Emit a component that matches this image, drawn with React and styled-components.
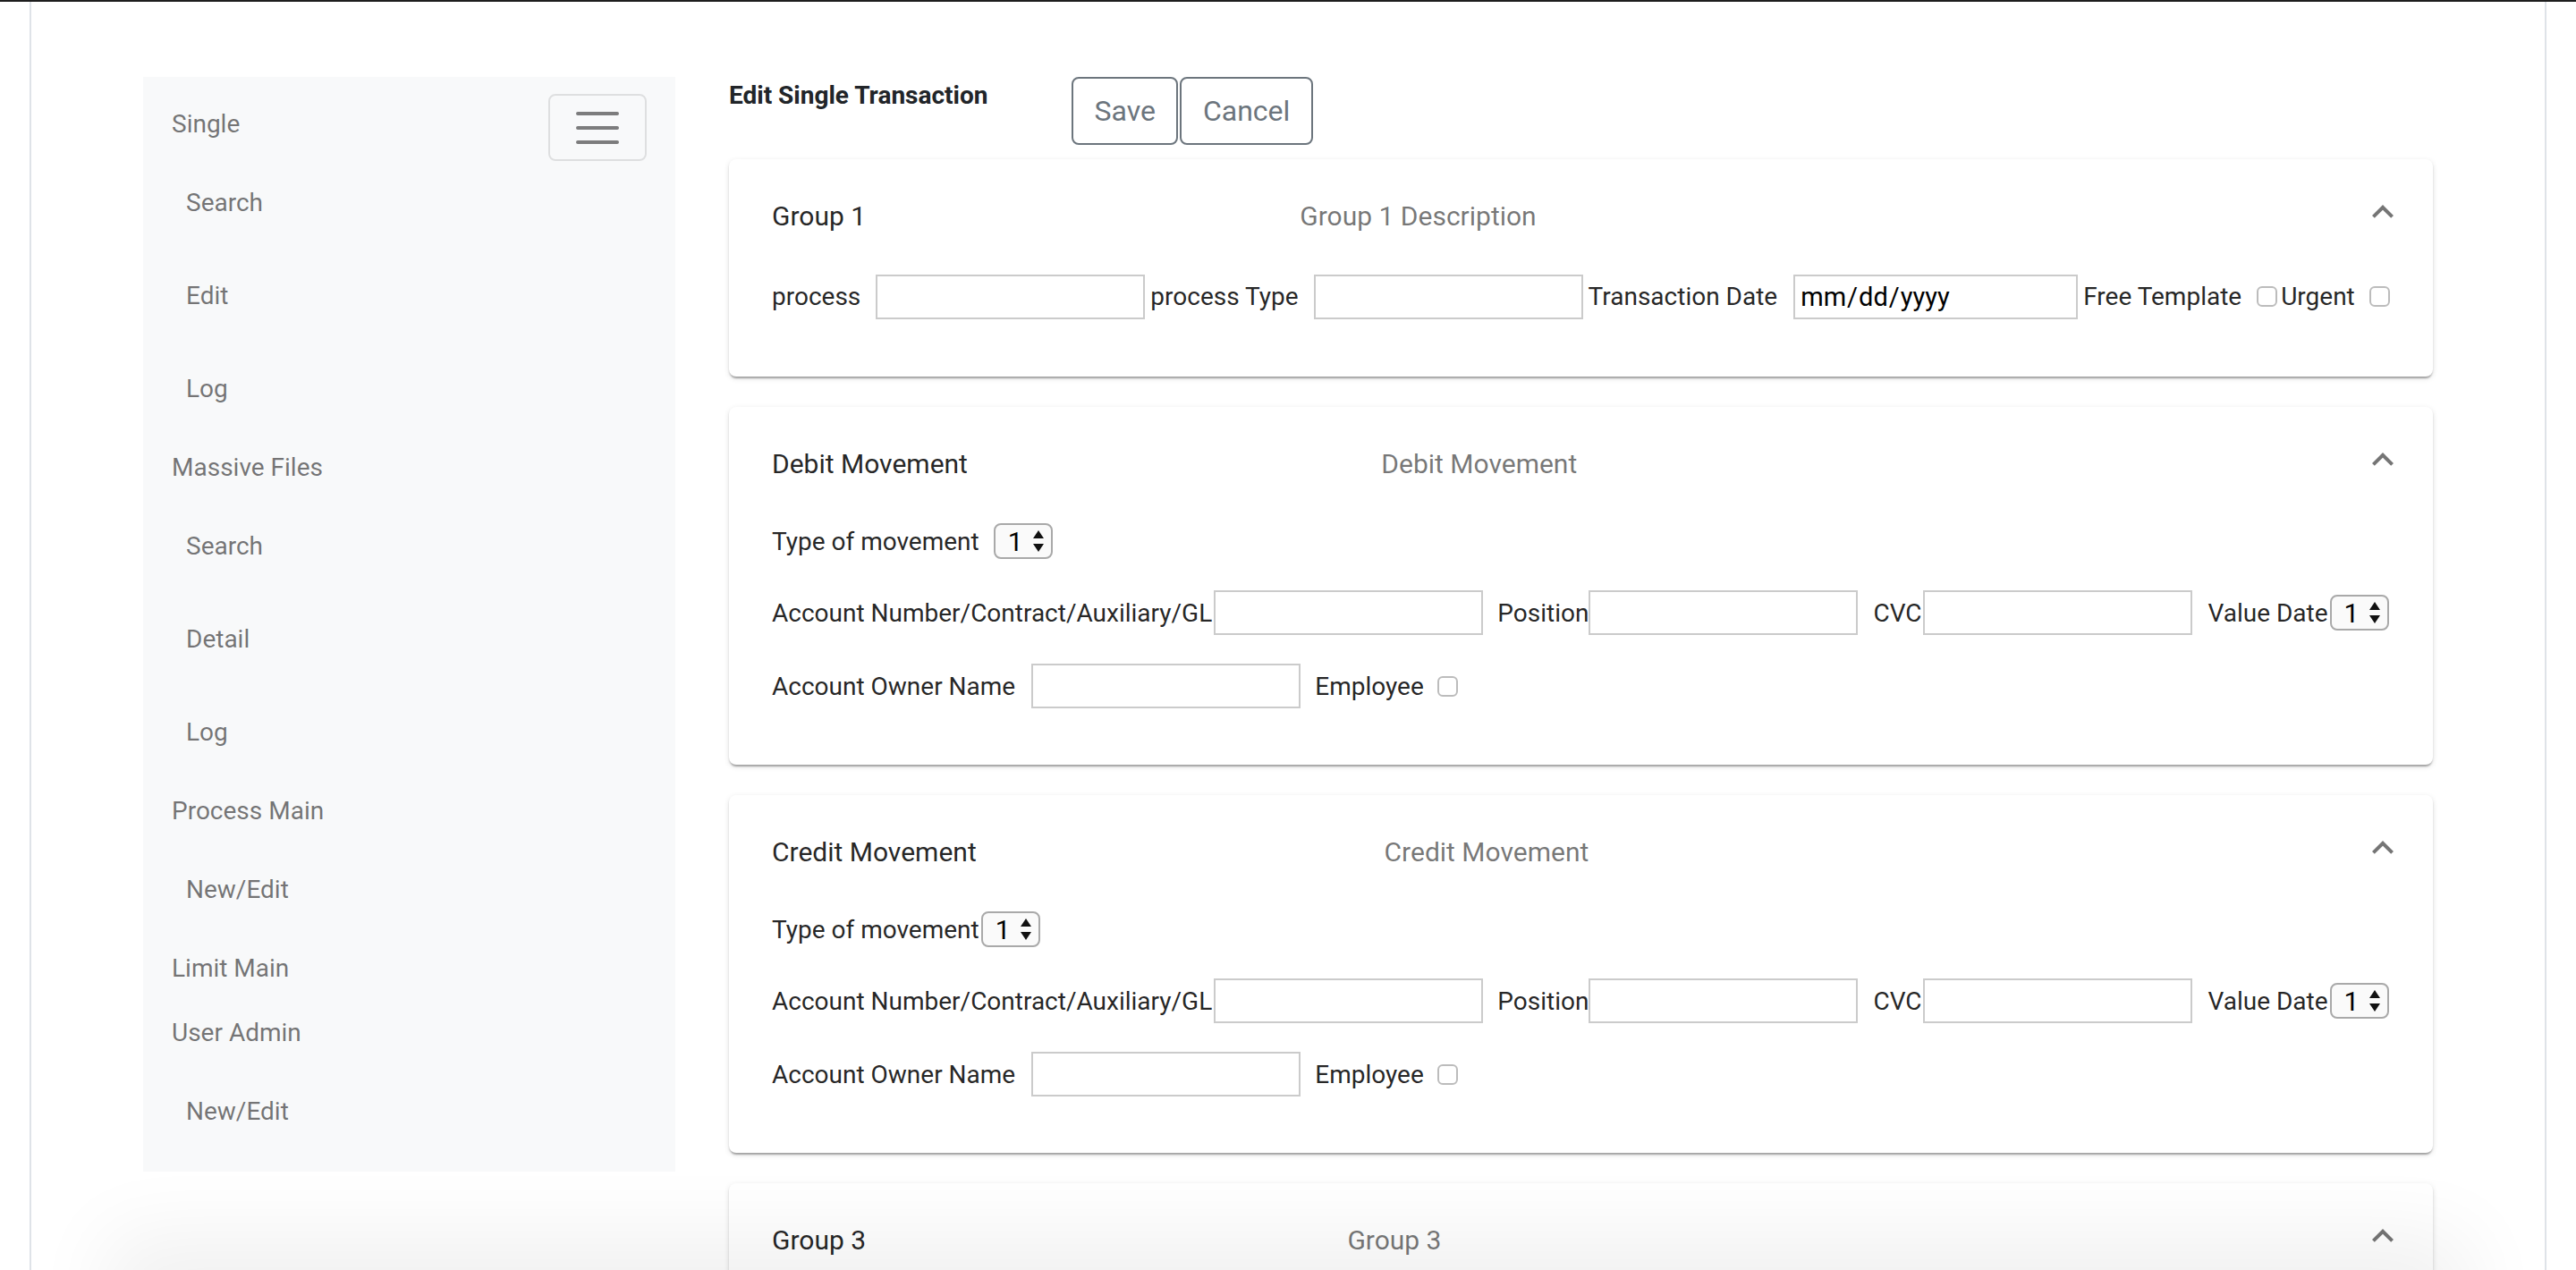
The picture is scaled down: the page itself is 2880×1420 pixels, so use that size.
import React from 'react';
import styled, { createGlobalStyle } from 'styled-components';

const GlobalStyle = createGlobalStyle`
  html, body { margin: 0; padding: 0; background: #fff; }
  body { font-family: Roboto, "Liberation Sans", Arial, sans-serif; }
  *, *::before, *::after { box-sizing: border-box; }
`;

const Page = styled.div`
  border-top: 2px solid #1e1e1e;
  min-height: 1420px;
`;

const Frame = styled.div`
  margin: 0 33px;
  min-height: 1418px;
  border-left: 2px solid #dfe3e8;
  border-right: 2px solid #dfe3e8;
  padding: 84px 125px 0;
`;

const Layout = styled.div`
  display: flex;
  align-items: flex-start;
  gap: 60px;
`;

/* ---------- Sidebar ---------- */
const Sidebar = styled.nav`
  flex: none;
  width: 595px;
  background: #f8f9fa;
  padding: 16px 0;
`;

const SidebarTop = styled.div`
  display: flex;
  justify-content: space-between;
  align-items: flex-start;
  height: 72px;
  padding-right: 32px;
`;

const NavHeading = styled.div`
  padding: 17px 32px 15px;
  font-size: 28px;
  line-height: 40px;
  color: rgba(0, 0, 0, 0.55);
`;

const NavSub = styled.div`
  height: 104px;
  display: flex;
  align-items: center;
  padding-left: 48px;
  font-size: 28px;
  color: rgba(0, 0, 0, 0.55);
`;

const Toggler = styled.button`
  width: 110px;
  height: 75px;
  margin-top: 3px;
  padding: 0;
  border: 2px solid rgba(0, 0, 0, 0.1);
  border-radius: 8px;
  background: transparent;
  display: flex;
  align-items: center;
  justify-content: center;
`;

/* ---------- Main ---------- */
const Main = styled.main`
  flex: 1;
  min-width: 0;
`;

const TitleBar = styled.div`
  display: flex;
  align-items: flex-start;
`;

const PageTitle = styled.h1`
  flex: 0 0 383px;
  margin: 0;
  font-size: 28px;
  line-height: 42px;
  font-weight: 700;
  color: #212529;
`;

const OutlineButton = styled.button`
  height: 76px;
  padding: 0 23.5px;
  border: 2px solid #6c757d;
  border-radius: 8px;
  background: #fff;
  color: #6c757d;
  font-family: Roboto, "Liberation Sans", Arial, sans-serif;
  font-size: 32px;
  & + & { margin-left: 2px; }
`;

const PanelList = styled.div`
  margin-top: 16px;
  display: flex;
  flex-direction: column;
  gap: 34px;
`;

const Panel = styled.section`
  background: #fff;
  border-radius: 8px;
  box-shadow: 0 4px 2px -2px rgba(0, 0, 0, 0.2), 0 2px 2px 0 rgba(0, 0, 0, 0.14),
    0 2px 6px 0 rgba(0, 0, 0, 0.12);
`;

const PanelSummary = styled.div`
  height: 126px;
  display: flex;
  align-items: center;
  padding: 0 32px 0 48px;
`;

const SummaryText = styled.div`
  flex: 1;
  min-width: 0;
  display: flex;
`;

const Heading = styled.span`
  flex: 1 1 auto;
  font-size: 30px;
  line-height: 1.5;
  color: rgba(0, 0, 0, 0.87);
  white-space: nowrap;
`;

const SubHeading = styled(Heading)`
  color: rgba(0, 0, 0, 0.54);
`;

const Spacer = styled.span`
  flex: 1 1 auto;
`;

const ExpandIcon = styled.svg`
  flex: none;
  width: 48px;
  height: 48px;
  margin-left: -48px;
  margin-bottom: 9px;
  fill: rgba(0, 0, 0, 0.54);
`;

const PanelBody = styled.div`
  padding: 0 48px 62px;
  display: flex;
  flex-direction: column;
  gap: 30px;
`;

const FieldRow = styled.div`
  display: flex;
  align-items: center;
  height: ${(p) => p.$h || 52}px;
`;

const FieldLabel = styled.label`
  flex: none;
  margin-left: ${(p) => p.$ml || 0}px;
  font-size: 28px;
  color: rgba(0, 0, 0, 0.87);
  white-space: nowrap;
`;

const TextBox = styled.input`
  flex: none;
  width: ${(p) => p.$w || 301}px;
  height: 50px;
  margin: 0 0 0 ${(p) => p.$ml || 0}px;
  border: 2px solid #cbcbcb;
  border-radius: 0;
  padding: 0 5px;
  background: #fff;
  color: #000;
  font-family: Roboto, "Liberation Sans", Arial, sans-serif;
  font-size: 29px;
  outline: none;
  &::-webkit-calendar-picker-indicator { display: none; }
`;

const CheckBox = styled.input.attrs({ type: 'checkbox' })`
  flex: none;
  appearance: none;
  width: 23px;
  height: 23px;
  margin: 0 0 0 ${(p) => p.$ml || 0}px;
  border: 2px solid #bcbcbc;
  border-radius: 6px;
  background: #fff;
`;

const SelectBox = styled.span`
  flex: none;
  display: inline-flex;
  align-items: center;
  width: 66px;
  height: 40px;
  margin-left: ${(p) => p.$ml || 0}px;
  border: 2px solid #a9a9a9;
  border-radius: 8px;
  background: #fafafa;
  padding-left: 14px;
`;

const NativeSelect = styled.select`
  appearance: none;
  border: 0;
  padding: 0;
  margin: 0;
  width: 28px;
  background: transparent;
  color: #000;
  font-family: Roboto, "Liberation Sans", Arial, sans-serif;
  font-size: 30px;
  outline: none;
`;

const SelectArrows = styled.svg`
  flex: none;
  width: 12px;
  height: 24px;
  fill: #111;
`;

const BottomShade = styled.div`
  position: fixed;
  left: 160px;
  right: 160px;
  bottom: -60px;
  height: 60px;
  box-shadow: 0 0 90px 40px rgba(0, 0, 0, 0.06);
  pointer-events: none;
`;

/* ---------- small pieces ---------- */
const HamburgerIcon = () => (
  <svg width="60" height="60" viewBox="0 0 30 30">
    <path d="M4 7h22M4 15h22M4 23h22" stroke="rgba(0,0,0,0.5)" strokeWidth="2" strokeLinecap="round" />
  </svg>
);

const Select = ({ ml }) => (
  <SelectBox $ml={ml}>
    <NativeSelect defaultValue="1">
      <option value="1">1</option>
      <option value="2">2</option>
    </NativeSelect>
    <SelectArrows viewBox="0 0 12 24">
      <path d="M6 0L12 9H0z" />
      <path d="M0 15h12L6 24z" />
    </SelectArrows>
  </SelectBox>
);

const AccordionPanel = ({ title, subtitle, children }) => (
  <Panel>
    <PanelSummary>
      <SummaryText>
        <Heading>{title}</Heading>
        <SubHeading>{subtitle}</SubHeading>
        <Spacer />
      </SummaryText>
      <ExpandIcon viewBox="0 0 24 24">
        <path d="M12 8l-6 6 1.41 1.41L12 10.83l4.59 4.58L18 14z" />
      </ExpandIcon>
    </PanelSummary>
    <PanelBody>{children}</PanelBody>
  </Panel>
);

const MovementFields = ({ selectGap }) => (
  <>
    <FieldRow $h={48}>
      <FieldLabel>Type of movement</FieldLabel>
      <Select ml={selectGap} />
    </FieldRow>
    <FieldRow>
      <FieldLabel>Account Number/Contract/Auxiliary/GL</FieldLabel>
      <TextBox $ml={2} />
      <FieldLabel $ml={16}>Position</FieldLabel>
      <TextBox $ml={0} />
      <FieldLabel $ml={17}>CVC</FieldLabel>
      <TextBox $ml={1} />
      <FieldLabel $ml={18}>Value Date</FieldLabel>
      <Select ml={2} />
    </FieldRow>
    <FieldRow>
      <FieldLabel>Account Owner Name</FieldLabel>
      <TextBox $ml={18} />
      <FieldLabel $ml={16}>Employee</FieldLabel>
      <CheckBox $ml={15} />
    </FieldRow>
  </>
);

const NAV = [
  { title: 'Single', items: ['Search', 'Edit', 'Log'] },
  { title: 'Massive Files', items: ['Search', 'Detail', 'Log'] },
  { title: 'Process Main', items: ['New/Edit'] },
  { title: 'Limit Main', items: [] },
  { title: 'User Admin', items: ['New/Edit'] },
];

export default function App() {
  return (
    <Page>
      <GlobalStyle />
      <Frame>
        <Layout>
          <Sidebar>
            {NAV.map((group, i) => (
              <React.Fragment key={group.title}>
                {i === 0 ? (
                  <SidebarTop>
                    <NavHeading>{group.title}</NavHeading>
                    <Toggler aria-label="Toggle navigation">
                      <HamburgerIcon />
                    </Toggler>
                  </SidebarTop>
                ) : (
                  <NavHeading>{group.title}</NavHeading>
                )}
                {group.items.map((item, j) => (
                  <NavSub key={j}>{item}</NavSub>
                ))}
              </React.Fragment>
            ))}
          </Sidebar>

          <Main>
            <TitleBar>
              <PageTitle>Edit Single Transaction</PageTitle>
              <OutlineButton>Save</OutlineButton>
              <OutlineButton>Cancel</OutlineButton>
            </TitleBar>

            <PanelList>
              <AccordionPanel title="Group 1" subtitle="Group 1 Description">
                <FieldRow $h={55}>
                  <FieldLabel>process</FieldLabel>
                  <TextBox $ml={17} />
                  <FieldLabel $ml={6}>process Type</FieldLabel>
                  <TextBox $ml={17} />
                  <FieldLabel $ml={6}>Transaction Date</FieldLabel>
                  <TextBox type="date" $w={318} $ml={18} />
                  <FieldLabel $ml={6}>Free Template</FieldLabel>
                  <CheckBox $ml={17} />
                  <FieldLabel $ml={4}>Urgent</FieldLabel>
                  <CheckBox $ml={16} />
                </FieldRow>
              </AccordionPanel>

              <AccordionPanel title="Debit Movement" subtitle="Debit Movement">
                <MovementFields selectGap={16} />
              </AccordionPanel>

              <AccordionPanel title="Credit Movement" subtitle="Credit Movement">
                <MovementFields selectGap={2} />
              </AccordionPanel>

              <AccordionPanel title="Group 3" subtitle="Group 3">
                <FieldRow />
              </AccordionPanel>
            </PanelList>
          </Main>
        </Layout>
      </Frame>
      <BottomShade />
    </Page>
  );
}
